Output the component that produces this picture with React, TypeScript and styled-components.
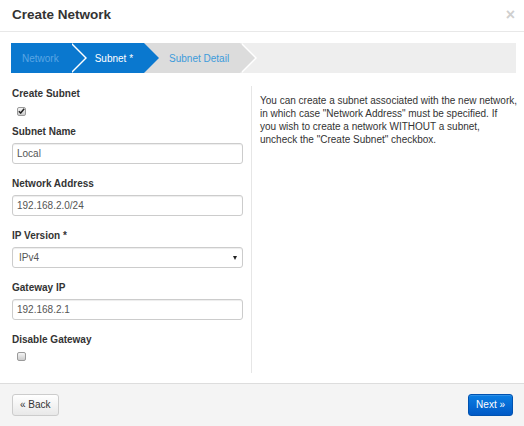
import React from "react";
import styled, { createGlobalStyle } from "styled-components";

const Global = createGlobalStyle`
  html, body { margin: 0; padding: 0; background: #fff; }
  body { font-family: "Liberation Sans", Arial, sans-serif; color: #333; }
  * { box-sizing: border-box; }
`;

const Dialog = styled.div`
  width: 524px;
  height: 426px;
  display: flex;
  flex-direction: column;
  background: #fff;
  overflow: hidden;
`;

const Header = styled.div`
  height: 32px;
  flex: none;
  display: flex;
  align-items: center;
  justify-content: space-between;
  padding: 0 8px 1px 12px;
  border-bottom: 1px solid #e8e8e8;
`;

const Title = styled.h3`
  margin: 0;
  font-size: 13.5px;
  font-weight: bold;
  color: #333;
  line-height: 18px;
`;

const Close = styled.span`
  font-size: 16px;
  font-weight: bold;
  color: #cfcfcf;
  line-height: 16px;
  margin-right: 1px;
`;

const Body = styled.div`
  flex: 1;
  display: flex;
  flex-direction: column;
  padding: 11px 8px 10px 11px;
`;

const Steps = styled.ol`
  display: flex;
  height: 30px;
  margin: 0;
  padding: 0;
  list-style: none;
  background: #eeeeee;
  flex: none;
`;

const Step = styled.li<{ $bg: string; $fg: string; $first?: boolean; $sep?: boolean; $z: number }>`
  position: relative;
  z-index: ${(p) => p.$z};
  display: flex;
  align-items: center;
  height: 30px;
  padding: 0 11px 0 ${(p) => (p.$first ? 11 : 25)}px;
  background: ${(p) => p.$bg};
  color: ${(p) => p.$fg};
  font-size: 10px;
  white-space: nowrap;

  &::before {
    content: "";
    display: ${(p) => (p.$sep ? "block" : "none")};
    position: absolute;
    top: 0;
    right: -17px;
    border-top: 15px solid transparent;
    border-bottom: 15px solid transparent;
    border-left: 15px solid #ffffff;
  }

  &::after {
    content: "";
    position: absolute;
    top: 0;
    right: -15px;
    border-top: 15px solid transparent;
    border-bottom: 15px solid transparent;
    border-left: 15px solid ${(p) => p.$bg};
  }
`;

const Row = styled.div`
  flex: 1;
  display: flex;
  margin-top: 13px;
`;

const LeftCol = styled.div`
  width: 240px;
  flex: none;
  padding: 0 8px 0 1px;
  display: flex;
  flex-direction: column;
`;

const RightCol = styled.div`
  flex: 1;
  border-left: 1px solid #e6e6e6;
  padding: 8px 0 0 8px;
`;

const Help = styled.p`
  margin: 0;
  white-space: nowrap;
  font-size: 10px;
  line-height: 13px;
  color: #333;
`;

const Label = styled.label`
  display: block;
  font-size: 10px;
  font-weight: bold;
  line-height: 14px;
  padding-top: 1px;
  color: #333;
`;

const Field = styled.div<{ $last?: boolean }>`
  display: flex;
  flex-direction: column;
  gap: 4px;
  margin-bottom: ${(p) => (p.$last ? 0 : 12)}px;
`;

const CheckField = styled.div`
  display: flex;
  flex-direction: column;
  margin-bottom: 6px;
`;

const CheckWrap = styled.div<{ $gap: number }>`
  height: 14px;
  margin-top: ${(p) => p.$gap}px;
  display: flex;
  align-items: center;
  padding-left: 5px;
`;

const Box = styled.span`
  width: 9px;
  height: 9px;
  border: 1px solid #9a9a9a;
  border-radius: 2px;
  background: linear-gradient(#f4f4f4, #cccccc);
  display: flex;
  align-items: center;
  justify-content: center;
`;

const Input = styled.input`
  height: 21px;
  width: 100%;
  border: 1px solid #cccccc;
  border-radius: 3px;
  padding: 0 4px;
  font-family: "Liberation Sans", Arial, sans-serif;
  font-size: 10px;
  color: #555;
  box-shadow: inset 0 1px 1px rgba(0, 0, 0, 0.075);
  outline: none;
`;

const SelectWrap = styled.div`
  position: relative;
  height: 21px;
`;

const Select = styled.select`
  appearance: none;
  -webkit-appearance: none;
  height: 21px;
  width: 100%;
  border: 1px solid #cccccc;
  border-radius: 3px;
  padding: 0 6px;
  font-family: "Liberation Sans", Arial, sans-serif;
  font-size: 10px;
  color: #555;
  background: #fff;
  box-shadow: inset 0 1px 1px rgba(0, 0, 0, 0.075);
  outline: none;
`;

const Caret = styled.span`
  position: absolute;
  right: 6px;
  top: 9px;
  width: 0;
  height: 0;
  border-left: 2.5px solid transparent;
  border-right: 2.5px solid transparent;
  border-top: 4px solid #222;
  pointer-events: none;
`;

const Footer = styled.div`
  height: 43px;
  flex: none;
  border-top: 1px solid #dddddd;
  background: #f4f4f4;
  display: flex;
  align-items: flex-start;
  justify-content: space-between;
  padding: 10px 11px 0 12px;
`;

const Button = styled.button<{ $primary?: boolean }>`
  height: 22px;
  padding: 0 7px;
  border-radius: 3px;
  font-family: "Liberation Sans", Arial, sans-serif;
  font-size: 10px;
  line-height: 20px;
  cursor: pointer;
  border: 1px solid ${(p) => (p.$primary ? "#0052b0" : "#cccccc")};
  color: ${(p) => (p.$primary ? "#ffffff" : "#333333")};
  background: ${(p) =>
    p.$primary
      ? "linear-gradient(#0a7ee3, #0059c6)"
      : "linear-gradient(#ffffff, #e8e8e8)"};
  box-shadow: inset 0 1px 0 rgba(255, 255, 255, 0.15);
`;

const Check = () => (
  <svg width="7" height="6" viewBox="0 0 7 6">
    <path d="M0.8 3.2 L2.7 5 L6.2 0.8" fill="none" stroke="#222" strokeWidth="1.5" />
  </svg>
);

export default function App() {
  return (
    <>
      <Global />
      <Dialog>
        <Header>
          <Title>Create Network</Title>
          <Close>×</Close>
        </Header>
        <Body>
          <Steps>
            <Step $first $sep $z={3} $bg="#0a78cf" $fg="#5aa6e4">Network</Step>
            <Step $z={2} $bg="#0a78cf" $fg="#ffffff">Subnet *</Step>
            <Step $sep $z={1} $bg="#dcdcdc" $fg="#3d9bdb">Subnet Detail</Step>
          </Steps>
          <Row>
            <LeftCol>
              <CheckField>
                <Label>Create Subnet</Label>
                <CheckWrap $gap={3}>
                  <Box>
                    <Check />
                  </Box>
                </CheckWrap>
              </CheckField>
              <Field>
                <Label>Subnet Name</Label>
                <Input defaultValue="Local" />
              </Field>
              <Field>
                <Label>Network Address</Label>
                <Input defaultValue="192.168.2.0/24" />
              </Field>
              <Field>
                <Label>IP Version *</Label>
                <SelectWrap>
                  <Select defaultValue="IPv4">
                    <option>IPv4</option>
                    <option>IPv6</option>
                  </Select>
                  <Caret />
                </SelectWrap>
              </Field>
              <Field>
                <Label>Gateway IP</Label>
                <Input defaultValue="192.168.2.1" />
              </Field>
              <CheckField>
                <Label>Disable Gateway</Label>
                <CheckWrap $gap={2}>
                  <Box />
                </CheckWrap>
              </CheckField>
            </LeftCol>
            <RightCol>
              <Help>
                You can create a subnet associated with the new network,
                <br />
                in which case "Network Address" must be specified. If
                <br />
                you wish to create a network WITHOUT a subnet,
                <br />
                uncheck the "Create Subnet" checkbox.
              </Help>
            </RightCol>
          </Row>
        </Body>
        <Footer>
          <Button>« Back</Button>
          <Button $primary>Next »</Button>
        </Footer>
      </Dialog>
    </>
  );
}
